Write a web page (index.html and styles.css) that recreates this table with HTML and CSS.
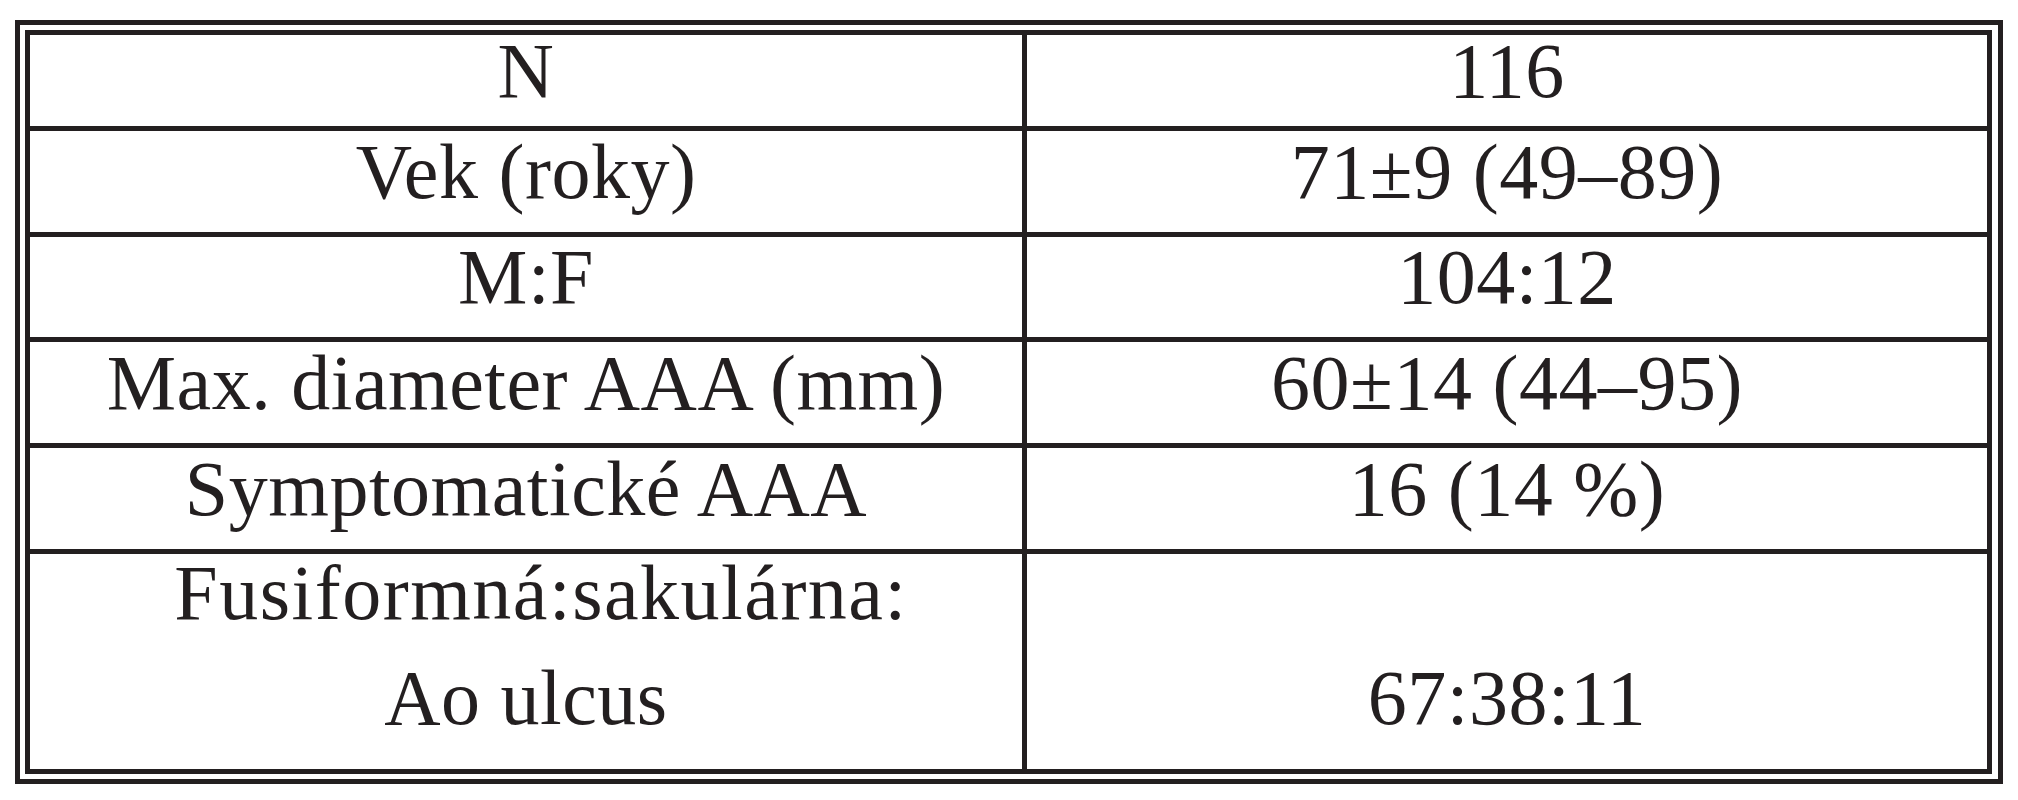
FILE: index.html
```html
<!DOCTYPE html>
<html>
<head>
<meta charset="utf-8">
<link rel="stylesheet" href="styles.css">
</head>
<body>
<div class="frame">
  <div class="grid">
    <div class="cell first"><span class="t">N</span></div>
    <div class="cell first"><span class="t">116</span></div>
    <div class="cell"><span class="t">Vek (roky)</span></div>
    <div class="cell"><span class="t">71±9 (49–89)</span></div>
    <div class="cell"><span class="t">M:F</span></div>
    <div class="cell"><span class="t">104:12</span></div>
    <div class="cell"><span class="t">Max. diameter AAA (mm)</span></div>
    <div class="cell"><span class="t">60±14 (44–95)</span></div>
    <div class="cell"><span class="t">Symptomatické AAA</span></div>
    <div class="cell"><span class="t">16 (14 %)</span></div>
    <div class="cell last">
      <div class="lines">
        <span class="t wide">Fusiformná:sakulárna:</span>
        <span class="t">Ao ulcus</span>
      </div>
    </div>
    <div class="cell last"><span class="t">67:38:11</span></div>
  </div>
</div>
</body>
</html>
```
FILE: styles.css
```css
html, body {
  margin: 0;
  padding: 0;
  background: #ffffff;
}
body {
  width: 2018px;
  height: 800px;
  overflow: hidden;
  font-family: "Liberation Serif", "Times New Roman", serif;
  color: #231f20;
}
.frame {
  margin: 20px 0 0 15px;
  width: 1988px;
  height: 764px;
  border: 5px solid #231f20;
  padding: 5px 6px 5px 5px;
  box-sizing: border-box;
}
.grid {
  display: grid;
  grid-template-columns: 992px 960px;
  grid-template-rows: 91px 101px 100px 101px 101px 215px;
  gap: 5px;
  padding: 5px;
  background: #231f20;
  width: 1967px;
  height: 744px;
  box-sizing: border-box;
}
.cell {
  background: #ffffff;
  display: flex;
  justify-content: center;
  align-items: flex-end;
  padding-bottom: 8px;
  box-sizing: border-box;
}
.cell.first {
  padding-bottom: 3px;
}
.cell.last {
  padding-bottom: 19px;
}
.lines {
  display: flex;
  flex-direction: column;
  align-items: center;
}
.t {
  display: block;
  font-size: 78px;
  line-height: 105px;
  height: 105px;
  white-space: nowrap;
  letter-spacing: 0.5px;
}
.t.wide {
  letter-spacing: 1.5px;
  margin-left: 30px;
}
```
